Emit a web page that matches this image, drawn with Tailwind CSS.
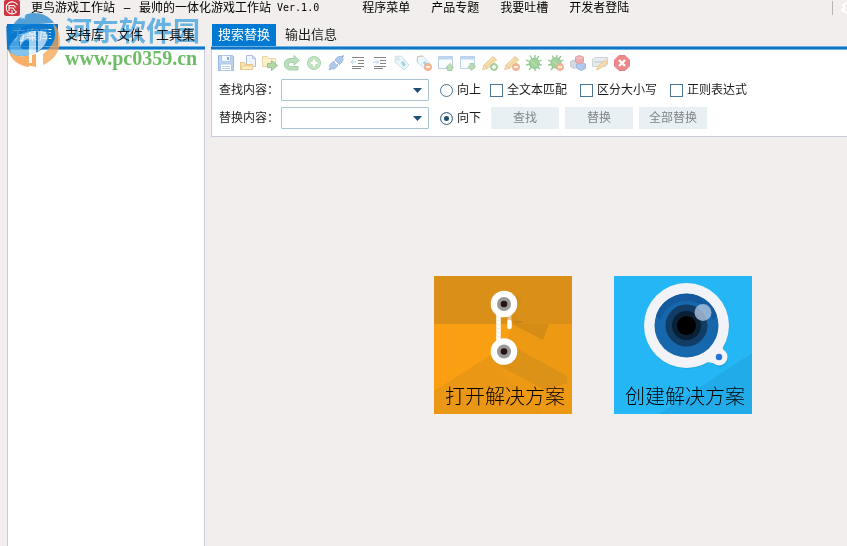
<!DOCTYPE html>
<html lang="zh-CN">
	<head>
		<meta charset="UTF-8" />
		<meta name="viewport" content="width=device-width, initial-scale=1.0" />
		<script src="https://cdn.jsdelivr.net/npm/@tailwindcss/browser@4"></script>
		<title>更鸟游戏工作站</title>
	</head>
	<body
		class="relative flex flex-col h-screen overflow-hidden bg-[#f1eeed] text-xs text-[#1c1c1c] font-['Liberation_Sans','Noto_Sans_CJK_SC',sans-serif]"
	>
		<!-- title bar -->
		<header class="flex items-center h-[15px] shrink-0 text-black">
			<svg class="w-4 h-4 ml-1 mr-[11px]" viewBox="0 0 16 16" fill="none" stroke="#fff" stroke-width="1.1">
				<rect width="16" height="16" rx="2" fill="#cf3540" stroke="none" />
				<path d="M13.500 5A6 6 0 1 0 13 11.500M5 11V5.500h5l1.500 2M5 8h4l3 4M8 10v3" />
			</svg>
			<h1 class="flex gap-1.5 items-center whitespace-nowrap">
				<span>更鸟游戏工作站</span><span class="w-3 text-center">–</span><span>最帅的一体化游戏工作站</span
				><span class="text-[10px] font-['DejaVu_Sans_Mono',monospace]">Ver.1.0</span>
			</h1>
			<nav class="flex gap-[21px] ml-[43px] whitespace-nowrap">
				<button>程序菜单</button>
				<button>产品专题</button>
				<button>我要吐槽</button>
				<button>开发者登陆</button>
			</nav>
			<div class="flex items-center gap-2 ml-auto">
				<span class="w-px h-3.5 bg-[#b9b2b2]"></span>
				<svg class="w-1.5 h-3" viewBox="0 0 6 12" fill="none" stroke="#fff" stroke-width="2">
					<path d="M6 1 2 3l2 3-3 2 5 3" />
				</svg>
			</div>
		</header>

		<main class="flex flex-1 gap-1.5 pt-[9px] pl-[7px] min-h-0">
			<!-- side panel -->
			<aside class="flex flex-col w-[198px] shrink-0">
				<div class="flex gap-px h-[22px] text-[13px]">
					<button class="px-1.5 bg-[#0079d3] text-white">方案库</button>
					<button class="px-1.5">支持库</button>
					<button class="px-1.5">文件</button>
					<button class="px-1.5">工具集</button>
				</div>
				<div class="h-1 bg-[#1275c5] border-y border-[#69b2e6]"></div>
				<div class="flex-1 bg-white border-x border-[#c9cadb]"></div>
			</aside>

			<section class="flex flex-col flex-1 min-w-0">
				<div class="flex gap-[3px] h-[22px] text-[13px]">
					<button class="px-1.5 ml-px bg-[#0079d3] text-white">搜索替换</button>
					<button class="px-1.5">输出信息</button>
				</div>
				<div class="h-1 bg-[#1275c5] border-y border-[#69b2e6]"></div>

				<div class="flex flex-col bg-white border-l border-b border-[#c9cadb] pt-[5px] pl-1.5 pb-[7px]">
					<div class="flex gap-1.5 opacity-60">
						<button aria-label="保存">
							<svg class="w-4 h-4" viewBox="0 0 16 16">
								<path d="M.5 .5h14l1 1v14H.5z" fill="#8db6e8" stroke="#5c8bc8" />
								<path d="M3.500 .500h9v6h-9z" fill="#eef5ff" stroke="#7ea5d8" />
								<path d="M2.500 9h11v6.500h-11z" fill="#fff" stroke="#7ea5d8" />
								<path d="M4 11.500h8M4 13.500h8" stroke="#8fb4e0" />
								<path d="M9 2h2v3H9z" fill="#3b6eb0" />
							</svg>
						</button>
						<button aria-label="打开">
							<svg class="w-4 h-4" viewBox="0 0 16 16">
								<path d="M6.500.500h6l3 3v8h-9z" fill="#e4efff" stroke="#7698cc" />
								<path d="M12.500.500v3h3" fill="none" stroke="#7698cc" />
								<path d="M.500 14.500v-7h4l1 2h7v5z" fill="#f8d775" stroke="#dba33c" />
								<path d="M1 14.500 2.500 11h11l-1.500 3.500z" fill="#ffe9a3" stroke="#dba33c" />
							</svg>
						</button>
						<button aria-label="导入">
							<svg class="w-4 h-4" viewBox="0 0 16 16">
								<path d="M.500 11.500v-10h5l1 2h7v8z" fill="#f9e3a0" stroke="#e0ba68" />
								<path d="M1 5.500h12" stroke="#fff3c5" />
								<path d="M5.500 8.500h4v-3l6 5-6 5v-3h-4z" fill="#7fc06a" stroke="#4f9a48" />
							</svg>
						</button>
						<button aria-label="刷新">
							<svg class="w-4 h-4" viewBox="0 0 16 16">
								<path
									d="M10 .500 15.500 5.500 10 10V7.500H6.500a2 2 0 0 0 0 4H14v3.500H6a5.300 5.300 0 0 1 0-11.500h4z"
									fill="#8fcb90"
									stroke="#6cb077"
								/>
							</svg>
						</button>
						<button aria-label="添加">
							<svg class="w-4 h-4" viewBox="0 0 16 16">
								<circle cx="8" cy="8" r="6.500" fill="#85c787" stroke="#68b273" />
								<circle cx="8" cy="8" r="5.200" fill="none" stroke="#b4dfb1" />
								<path d="M8 4.500v7M4.500 8h7" stroke="#fff" stroke-width="2.400" />
							</svg>
						</button>
						<button aria-label="连接">
							<svg class="w-4 h-4" viewBox="0 0 16 16">
								<path d="M1 15l3-3M13 3l2.500-2.500" stroke="#4772b8" stroke-width="1.600" />
								<path d="M2.500 9 5 6.500l4.500 4.500L7 13.500c-2 1-3.500.500-4.500-.500s-1-2.500 0-4z" fill="#7ba5e2" stroke="#5c86c8" />
								<path d="M7 5l2.500-3c2-1 4-.500 5 .500s.500 3-.500 4.500L11.500 9.500z" fill="#7ba5e2" stroke="#5c86c8" />
								<path d="M5.500 7.500 8 5M8.500 10.500 11 8" stroke="#5c86c8" />
							</svg>
						</button>
						<button aria-label="减少缩进">
							<svg class="w-4 h-4" viewBox="0 0 16 16" stroke="#333" fill="none">
								<path d="M2 2.500h12M8 5.500h6M8 8.500h6M2 11.500h12M2 13.500h9" />
								<path d="M1 7h5M3.500 4.500 1 7l2.500 2.500" stroke="#8fb2e0" />
							</svg>
						</button>
						<button aria-label="增加缩进">
							<svg class="w-4 h-4" viewBox="0 0 16 16" stroke="#333" fill="none">
								<path d="M2 2.500h12M8 5.500h6M8 8.500h6M2 11.500h12M2 13.500h9" />
								<path d="M1 7h5M4 4.500 6.500 7 4 9.500" stroke="#8fb2e0" />
							</svg>
						</button>
						<button aria-label="标签">
							<svg class="w-4 h-4" viewBox="0 0 16 16">
								<path d="M1.500 1.500 7 1l8 9-5 5-9-8z" fill="#e1f2f8" stroke="#a5c8da" />
								<circle cx="4" cy="4" r="1.200" fill="#fff" stroke="#9fc2d4" />
								<path d="M7 7.500 9 6l3 3.500L9.500 12z" fill="#65b3cf" />
							</svg>
						</button>
						<button aria-label="删除标签">
							<svg class="w-4 h-4" viewBox="0 0 16 16">
								<path d="M1.500 1.500 7 1l8 9-5 5-9-8z" fill="#e1f2f8" stroke="#a5c8da" />
								<path d="M1.500 6.500v-5L7 1" fill="none" stroke="#e58b6d" />
								<path d="M7 7.500 9 6l2 2.500-2 2.500z" fill="#65b3cf" />
								<circle cx="12" cy="12" r="3.500" fill="#ee8a52" stroke="#e07848" />
								<path d="M10 12h4" stroke="#fff" stroke-width="1.500" />
							</svg>
						</button>
						<button aria-label="上传窗口">
							<svg class="w-4 h-4" viewBox="0 0 16 16">
								<path d="M.500 1.500h14v12H.500z" fill="#f6faff" stroke="#8db3d8" />
								<path d="M1 2h13v2.500H1z" fill="#8fbdea" />
								<path d="M9.500 15.500v-3H8l4-4 3.500 4H14v3z" fill="#8fc987" stroke="#6fae6c" />
							</svg>
						</button>
						<button aria-label="下载窗口">
							<svg class="w-4 h-4" viewBox="0 0 16 16">
								<path d="M.500 1.500h14v12H.500z" fill="#f6faff" stroke="#8db3d8" />
								<path d="M1 2h13v2.500H1z" fill="#8fbdea" />
								<path d="M10 8.500h3.500v3h2l-4 4-3.500-4h2z" fill="#8fc987" stroke="#6fae6c" />
							</svg>
						</button>
						<button aria-label="添加标记">
							<svg class="w-4 h-4" viewBox="0 0 16 16">
								<path d="M.500 14.500 2 10l9-8.500L14.500 5l-9 8.500z" fill="#f6cf70" stroke="#dba75c" />
								<path d="M2 10l3.500 3.500M4 12l8-8M11 1.500 14.500 5" fill="none" stroke="#d0a26a" />
								<circle cx="12" cy="12" r="3.500" fill="#79bd68" stroke="#5ea35f" />
								<path d="M12 10v4M10 12h4" stroke="#fff" stroke-width="1.300" />
							</svg>
						</button>
						<button aria-label="删除标记">
							<svg class="w-4 h-4" viewBox="0 0 16 16">
								<path d="M.500 14.500 2 10l9-8.500L14.500 5l-9 8.500z" fill="#f6cf70" stroke="#dba75c" />
								<path d="M2 10l3.500 3.500M4 12l8-8M11 1.500 14.500 5" fill="none" stroke="#d0a26a" />
								<circle cx="12" cy="12" r="3.500" fill="#ee8a52" stroke="#e07848" />
								<path d="M10 12h4" stroke="#fff" stroke-width="1.500" />
							</svg>
						</button>
						<button aria-label="调试">
							<svg class="w-4 h-4" viewBox="0 0 16 16">
								<path d="M4 .500 6 4M9 0v4M13 1l-3 4M15.500 5 11 7M15.500 10 11 9M0 5l5 2M0 10l5-1M3 15l3-4M9 16v-4M14 14l-4-3" stroke="#4a9f4c" stroke-width="1.300" />
								<ellipse cx="8" cy="8.500" rx="5" ry="5.200" transform="rotate(-35 8 8)" fill="#67b65b" stroke="#4fa350" />
								<path d="M5 5.500l6 6" stroke="#a2d991" />
							</svg>
						</button>
						<button aria-label="停止调试">
							<svg class="w-4 h-4" viewBox="0 0 16 16">
								<path d="M4 .500 6 4M9 0v4M13 1l-3 4M15.500 5 11 7M0 5l5 2M0 10l5-1M3 15l3-4" stroke="#4a9f4c" stroke-width="1.300" />
								<ellipse cx="8" cy="8" rx="5" ry="5.200" transform="rotate(-35 8 8)" fill="#67b65b" stroke="#4fa350" />
								<path d="M5 5.500l6 6" stroke="#a2d991" />
								<circle cx="12" cy="12" r="3.500" fill="#ee8a52" stroke="#e07848" />
								<path d="M10 12h4" stroke="#fff" stroke-width="1.500" />
							</svg>
						</button>
						<button aria-label="模块">
							<svg class="w-4 h-4" viewBox="0 0 16 16">
								<path d="M.500 6.500 4 5l4 1.500v5L4 13.500l-3.500-2z" fill="#b9c2cf" stroke="#9aa6b8" />
								<path d="M6.500 9 11 7.500 15.500 9v4.500L11 15.500 6.500 13z" fill="#7fa9e0" stroke="#6188c6" />
								<path d="M5.500 2 9.500 .500 13.500 2v5L9.500 9 5.500 7z" fill="#e57a7c" stroke="#cc5a60" />
								<path d="M5.500 2 9.500 3.500 13.500 2" fill="none" stroke="#f4aaa8" />
							</svg>
						</button>
						<button aria-label="编辑">
							<svg class="w-4 h-4" viewBox="0 0 16 16">
								<path d="M.500 4.500 3 2.500h12.500V9l-2 2.500H.500z" fill="#dce0e7" stroke="#aeb5c0" />
								<path d="M2 7h10" stroke="#8c97a8" />
								<path d="M4.500 15 6 11l7.500-6 2 2.500L8 13.500z" fill="#f7ca68" stroke="#d4a25a" />
							</svg>
						</button>
						<button aria-label="关闭">
							<svg class="w-4 h-4" viewBox="0 0 16 16">
								<path d="M5 .500h6L15.500 5v6L11 15.500H5L.500 11V5z" fill="#e23a3c" stroke="#d0303a" />
								<path d="M5 5l6 6M11 5l-6 6" stroke="#fff" stroke-width="2.400" />
							</svg>
						</button>
					</div>

					<form class="flex flex-col gap-1.5 pt-2 pl-px whitespace-nowrap">
						<div class="flex items-center h-[22px]">
							<label for="find" class="w-[62px]">查找内容：</label>
							<div class="relative w-[148px] h-full mr-[11px]">
								<select id="find" class="appearance-none w-full h-full bg-white border border-[#a9c3d2] rounded-[1px]"></select>
								<svg class="absolute right-[7px] top-[9px] w-[9px] h-[5px] pointer-events-none" viewBox="0 0 9 5">
									<path d="M0 0h9L4.500 5z" fill="#1d4f73" />
								</svg>
							</div>
							<label class="flex items-center gap-1 mr-[9px]">
								<input type="radio" name="dir" class="appearance-none w-[13px] h-[13px] rounded-full border border-[#4b7698] checked:bg-[#1d4f73] checked:shadow-[inset_0_0_0_3px_#fff]" />向上
							</label>
							<div class="flex gap-[13px]">
								<label class="flex items-center gap-1">
									<input type="checkbox" class="appearance-none w-[13px] h-[13px] border border-[#4b7698] checked:bg-[#1d4f73]" />全文本匹配
								</label>
								<label class="flex items-center gap-1">
									<input type="checkbox" class="appearance-none w-[13px] h-[13px] border border-[#4b7698] checked:bg-[#1d4f73]" />区分大小写
								</label>
								<label class="flex items-center gap-1">
									<input type="checkbox" class="appearance-none w-[13px] h-[13px] border border-[#4b7698] checked:bg-[#1d4f73]" />正则表达式
								</label>
							</div>
						</div>
						<div class="flex items-center h-[22px]">
							<label for="replace" class="w-[62px]">替换内容：</label>
							<div class="relative w-[148px] h-full mr-[11px]">
								<select id="replace" class="appearance-none w-full h-full bg-white border border-[#a9c3d2] rounded-[1px]"></select>
								<svg class="absolute right-[7px] top-[9px] w-[9px] h-[5px] pointer-events-none" viewBox="0 0 9 5">
									<path d="M0 0h9L4.500 5z" fill="#1d4f73" />
								</svg>
							</div>
							<label class="flex items-center gap-1 mr-2.5">
								<input type="radio" name="dir" checked class="appearance-none w-[13px] h-[13px] rounded-full border border-[#4b7698] checked:bg-[#1d4f73] checked:shadow-[inset_0_0_0_3px_#fff]" />向下
							</label>
							<div class="flex gap-1.5 h-full text-[#7e8587]">
								<button type="button" class="w-[68px] bg-[#e9f0f4]">查找</button>
								<button type="button" class="w-[68px] bg-[#e9f0f4]">替换</button>
								<button type="button" class="w-[68px] bg-[#e9f0f4]">全部替换</button>
							</div>
						</div>
					</form>
				</div>

				<!-- start tiles -->
				<div class="flex gap-[42px] pt-[139px] pl-[223px] text-xl text-black font-light font-['Noto_Sans_CJK_SC',sans-serif]">
					<button class="relative w-[138px] h-[138px] shrink-0">
						<svg class="w-full h-full" viewBox="0 0 138 138">
							<path d="M0 0h138v138H0z" fill="#fb9f12" />
							<path d="M57 79 0 115v23h138v-23z" fill="#e99715" />
							<path d="M78 48h60v90h-30L64 91z" fill="#ee9913" />
							<path d="M0 0h138v48H0z" fill="#d98f18" />
							<path d="M80 18l8 5-6 16 4 9h29l-6 16-33-17z" fill="#d58c17" />
							<path d="M82 72l51 28v7l-22 7-45-24z" fill="#dc9117" />
							<path d="M81 46h7" stroke="#b87620" />
							<path d="M64.500 38v28" stroke="#fff" stroke-width="4.500" />
							<path d="M64.500 40v24" stroke="#f1ebe2" stroke-width="4" stroke-dasharray="1 3" />
							<path d="M75.500 38v8" stroke="#e4c48c" stroke-width="4" />
							<path d="M75.500 46v5" stroke="#fff" stroke-width="4.500" stroke-linecap="round" />
							<circle cx="70" cy="28" r="13.300" fill="#fff" />
							<circle cx="70" cy="28" r="7" fill="#999" />
							<circle cx="70" cy="28" r="3.300" fill="#2b1212" />
							<circle cx="70" cy="75.500" r="13.300" fill="#fff" />
							<circle cx="70" cy="75.500" r="7" fill="#999" />
							<circle cx="70" cy="75.500" r="3.300" fill="#2b1212" />
						</svg>
						<span class="absolute inset-x-0 bottom-1 left-1">打开解决方案</span>
					</button>
					<button class="relative w-[138px] h-[138px] shrink-0">
						<svg class="w-full h-full" viewBox="0 0 138 138">
							<path d="M0 0h138v138H0z" fill="#25b7f5" />
							<path d="M138 77v61H45z" fill="#22abe9" />
							<g fill="#1d96d4" opacity=".5">
								<circle cx="73" cy="51" r="42" />
								<circle cx="106" cy="83" r="8" />
							</g>
							<g fill="#f2f3f6">
								<circle cx="72.500" cy="49.500" r="42.500" />
								<circle cx="105" cy="81" r="8.500" />
								<path d="M86 85l13 2 10-14-2-8z" />
							</g>
							<circle cx="72.500" cy="49.500" r="32" fill="#1767ad" />
							<path d="M42 40a32 32 0 0 1 61 0l-4 4a28 28 0 0 0-53 0z" fill="#155a9f" />
							<circle cx="72.500" cy="49.500" r="21" fill="#103c66" />
							<circle cx="72.500" cy="49.500" r="14.500" fill="#0a2036" />
							<circle cx="72.500" cy="49.500" r="9.500" fill="#000" />
							<circle cx="89" cy="36.500" r="8.500" fill="#b9cbe3" opacity=".75" />
							<circle cx="105" cy="81" r="3.200" fill="#2473d9" />
						</svg>
						<span class="absolute inset-x-0 bottom-1 left-1">创建解决方案</span>
					</button>
				</div>
			</section>
		</main>

		<!-- site stamp over the top left corner -->
		<div class="absolute left-1 top-3 flex gap-1 pointer-events-none">
			<svg class="w-[57px] h-[57px] opacity-75" viewBox="0 0 57 57">
				<path d="M7 17C12 6 21 1 30 1c9 0 16 4 20 10L35 12C24 12 14 16 7 26z" fill="#1d86cf" />
				<path d="M2 14h5v9c8-8 18-11 27-11 9 0 13 6 11 14-2 9-12 17-24 18-9 1-16-2-18-8z" fill="#0f78cb" />
				<path d="M49 11c5 5 7 11 7 18 0 11-7 20-17 24V42c8-6 13-14 12-22-1-4-1-6-2-9z" fill="#f5a350" />
				<path d="M4 38c4 5 11 7 17 6l4-1v12C15 54 7 48 4 38z" fill="#f39437" />
				<path d="M9 29c6-7 12-10 19-9l-6 4c-7 3-9 8-5 12 4 3 10 1 15-4l-7 11c-8 2-15 1-18-3s-1-8 2-11z" fill="#5cb0e8" />
				<path d="M16 26c4-5 10-7 16-7v24l-7 1V27c-4 0-7 3-9 8zM34 19h5c4 1 5 4 4 8-1 5-4 9-9 12z" fill="#fff" opacity=".85" />
				<path d="M28 43v8h-6v2l10 2V42z" fill="#f39437" />
				<path d="M19 1l1 2 2 .500-1.500 1.500.500 2-2-1-2 1 .500-2L16 3.500l2-.500z" fill="#d8ecf8" />
			</svg>
			<div class="flex flex-col mix-blend-multiply">
				<span class="text-[27px] leading-9 font-bold text-[#6cc0f2] font-['Noto_Sans_CJK_SC',sans-serif]">河东软件园</span>
				<span class="text-xl leading-5 font-bold text-[#6dbd65] font-['Liberation_Serif',serif]">www.pc0359.cn</span>
			</div>
		</div>
	</body>
</html>
